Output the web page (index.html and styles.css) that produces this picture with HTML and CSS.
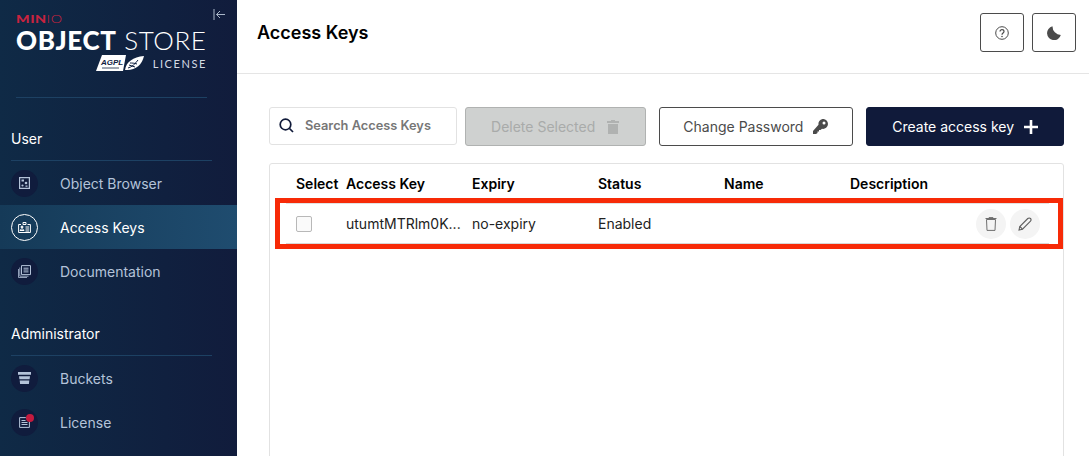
FILE: index.html
```html
<!DOCTYPE html>
<html lang="en">
<head>
  <meta charset="UTF-8">
  <title>Access Keys</title>
  <link rel="stylesheet" href="styles.css">
</head>
<body>
  <div class="app">
    <!-- Sidebar -->
    <aside class="sidebar">
      <svg class="collapse" width="13" height="13" viewBox="0 0 13 13" fill="none" stroke="#a9b6c8" stroke-width="1"><path d="M1 1v11M12 6.5H3.5M7 3 3.5 6.500 7 10"/></svg>
      <div class="logo">
        <div class="logo-minio"><b>MIN</b>IO</div>
        <div class="logo-name"><b>OBJECT</b> STORE</div>
        <div class="logo-license">
          <svg class="agpl" width="48" height="17" viewBox="0 0 48 17"><path d="M6 0h24l-3 16H0z" fill="#fff"/><text class="agpl-text" x="5" y="10">AGPL</text><path d="M6 13h17" stroke="#10203f" stroke-width=".8"/><path d="M29 15C30 7 37 2 48 1 46 10 39 16 29 15z" fill="#fff"/><path d="M32 13c4-1 7-4 10-8M34 8c2 0 4 0 7 1M33 10c2 1 4 1 6 2" stroke="#10203f" fill="none"/></svg>
          <span>LICENSE</span>
        </div>
      </div>
      <div class="logo-line"></div>

      <div class="section">User</div>
      <a class="nav-item">
        <span class="nav-icon"><svg width="11" height="12" viewBox="0 0 11 12" fill="#b4c3d9"><path d="M0 0h11v12H0zM1.200 1.200v9.600h8.600V1.200z"/><rect x="2.500" y="2.500" width="2.500" height="2"/><circle cx="7" cy="6" r="1.300"/><circle cx="3.500" cy="8.500" r="1.100"/><rect x="6.500" y="8.500" width="2" height="1.300"/></svg></span>
        Object Browser
      </a>
      <a class="nav-item active">
        <span class="nav-icon"><svg width="13" height="11" viewBox="0 0 13 11" fill="none" stroke="#fff"><path d="M3 2.500H.6v8h11.800v-8H9.500"/><path d="M5 .5h3v2H5z"/><circle cx="4" cy="5" r="1" fill="#fff"/><path d="M2 8.500c.3-2 3.700-2 4 0zM7.500 5H11M7.500 7H11M7.500 9H11"/></svg></span>
        Access Keys
      </a>
      <a class="nav-item">
        <span class="nav-icon"><svg width="13" height="13" viewBox="0 0 13 13" fill="none" stroke="#b4c3d9"><path d="M3.500.6h9v9h-9zM5.500 3.200h5M5.500 5h5M5.500 6.900h5"/><path d="M1.800 2.500v8.700h8.700M.5 4v8.500H9" stroke-width=".8"/></svg></span>
        Documentation
      </a>

      <div class="section">Administrator</div>
      <a class="nav-item">
        <span class="nav-icon"><svg width="13" height="12" viewBox="0 0 13 12" fill="#b4c3d9"><path d="M0 0h13v2.800H0zM1 4.200h11l-.4 3H1.400zM1.700 8.500h9.600l-.4 3.500H2.100z"/></svg></span>
        Buckets
      </a>
      <a class="nav-item">
        <span class="nav-icon"><svg width="11" height="11" viewBox="0 0 11 11" fill="none" stroke="#b4c3d9"><path d="M.6.6h6l3.800 2.500v7.300H.6zM2.500 3.500h4M2.500 5.500h6M2.500 7.500h6"/></svg><i class="dot"></i></span>
        License
      </a>
    </aside>

    <!-- Main -->
    <main class="main">
      <header class="topbar">
        <h1>Access Keys</h1>
        <div class="top-actions">
          <button class="square"><svg width="14" height="14" viewBox="0 0 14 14" fill="none" stroke="#4b4b4b"><circle cx="7" cy="7" r="6.300"/><path d="M5 5.500C5 3 9 3 9 5.500 9 7 7 7 7 8.700" stroke-width="1.200"/><circle cx="7" cy="10.500" r=".8" fill="#4b4b4b" stroke="none"/></svg></button>
          <button class="square"><svg width="14" height="14" viewBox="0 0 14 14" fill="#4b4b4b"><path d="M5.500.3a7 7 0 1 0 8.300 8.700A8.500 8.500 0 0 1 5.500.3z"/></svg></button>
        </div>
      </header>

      <div class="content">
        <div class="toolbar">
          <label class="search">
            <svg width="15" height="15" viewBox="0 0 15 15" fill="none" stroke="#101a3a" stroke-width="1.700"><circle cx="6.500" cy="6.500" r="5.300"/><path d="M10.500 10.500 14 14"/></svg>
            <input type="text" placeholder="Search Access Keys">
          </label>
          <button class="btn btn-disabled">Delete Selected
            <svg width="12" height="14" viewBox="0 0 12 14" fill="#b0b2b1"><path d="M4 0h4v1h4v2H0V1h4zM1 4h10v10H1z"/></svg>
          </button>
          <button class="btn btn-outline">Change Password
            <svg width="15" height="15" viewBox="0 0 15 15" fill="#4b4b4b"><path d="M9.500 0A5 5 0 0 1 15 5a5 5 0 0 1-6 4.800L7.500 11H6v1.500H4.500V14L3 15H0v-3l5.500-6.300A5 5 0 0 1 9.500 0zm1.500 2.500a1.500 1.500 0 1 0 0 3 1.500 1.500 0 0 0 0-3z"/></svg>
          </button>
          <button class="btn btn-primary">Create access key
            <svg width="14" height="14" viewBox="0 0 14 14" fill="#fff"><path d="M5.700 0h2.600v5.700H14v2.600H8.300V14H5.700V8.300H0V5.700h5.700z"/></svg>
          </button>
        </div>

        <div class="table-box">
          <div class="table-row table-head">
            <span class="col-select">Select</span>
            <span class="col">Access Key</span>
            <span class="col">Expiry</span>
            <span class="col">Status</span>
            <span class="col">Name</span>
            <span class="col">Description</span>
          </div>
          <div class="table-row table-body">
            <span class="col-select"><i class="check"></i></span>
            <span class="col key">utumtMTRlm0K...</span>
            <span class="col">no-expiry</span>
            <span class="col">Enabled</span>
            <span class="col"></span>
            <span class="col"></span>
            <span class="row-actions">
              <button class="round"><svg width="12" height="14" viewBox="0 0 12 14" fill="none" stroke="#6f6f6f"><path d="M1.500 2.500h9l-.5 10.900H2zM.5 1.500h11M4 1.500V.6h4v.9"/></svg></button>
              <button class="round"><svg width="14" height="14" viewBox="0 0 14 14" fill="none" stroke="#5f5f5f" stroke-width="1.100"><path d="M1 13l.8-3.500L9.800 1.500a1.500 1.500 0 0 1 2.700 2.700L4.500 12.200z"/><path d="M1.800 9.500l2.700 2.700"/></svg></button>
            </span>
          </div>
          <div class="highlight"></div>
        </div>
      </div>
    </main>
  </div>
</body>
</html>
```

FILE: styles.css
```css
* {
  box-sizing: border-box;
}
html, body {
  margin: 0;
  height: 456px;
  overflow: hidden;
}
body {
  font-family: Inter, "Liberation Sans", sans-serif;
  font-size: 14px;
  color: #000;
  background-color: #fff;
}
button {
  font-family: inherit;
  cursor: pointer;
}
.app {
  display: flex;
  height: 456px;
}

/* Sidebar */
.sidebar {
  position: relative;
  flex: 0 0 236px;
  background: linear-gradient(90deg, #0f2a46 0%, #10203f 70%, #111c3c 100%);
  color: #fff;
}
.collapse {
  position: absolute;
  top: 8px;
  left: 213px;
}
.logo {
  height: 97px;
  padding: 14px 30px 0 16px;
}
.logo-minio {
  font-family: Lato, sans-serif;
  font-size: 11px;
  line-height: 10px;
  letter-spacing: .4px;
  font-weight: 300;
  color: #c8233f;
  transform: scaleX(1.300);
  transform-origin: left;
}
.logo-minio b {
  font-weight: 900;
}
.logo-name {
  font-family: Lato, sans-serif;
  font-size: 26px;
  line-height: 28px;
  margin-top: 2px;
  white-space: nowrap;
  width: 191px;
  letter-spacing: .6px;
  font-weight: 300;
}
.logo-name b {
  font-weight: 900;
}
.logo-license {
  display: flex;
  justify-content: flex-end;
  align-items: center;
  gap: 9px;
  margin-top: 1px;
  font-family: Lato, sans-serif;
  font-size: 11px;
  letter-spacing: 1.600px;
  color: #d5dbe5;
}
.agpl-text {
  font-family: "Liberation Sans", sans-serif;
  font-size: 8px;
  font-weight: 700;
  font-style: italic;
  letter-spacing: 0;
  fill: #10203f;
}
.logo-line {
  height: 1px;
  margin: 0 30px 0 16px;
  background-color: #1d4163;
}
.section {
  margin: 28px 25px 0 11px;
  height: 35px;
  padding-top: 4px;
  line-height: 18px;
  border-bottom: 1px solid #1d4163;
  color: #fff;
}
.nav-item {
  display: flex;
  align-items: center;
  height: 44px;
  padding-left: 11px;
  gap: 22px;
  color: #b4c3d9;
}
.nav-item.active {
  color: #fff;
  background: linear-gradient(90deg, #153a58, #1f4c6f);
}
.nav-icon {
  position: relative;
  display: flex;
  align-items: center;
  justify-content: center;
  width: 27px;
  height: 27px;
  border-radius: 50%;
  background-color: #101c3d;
}
.active .nav-icon {
  background-color: transparent;
  border: 1px solid #fff;
}
.dot {
  position: absolute;
  top: 5px;
  left: 15px;
  width: 8px;
  height: 8px;
  border-radius: 50%;
  background-color: #c51b3f;
}

/* Main */
.main {
  flex: 1;
  min-width: 0;
}
.topbar {
  display: flex;
  justify-content: space-between;
  align-items: center;
  height: 74px;
  padding: 0 13px 8px 20px;
  border-bottom: 1px solid #e5e5e5;
}
.topbar h1 {
  margin: 0;
  font-size: 18px;
  font-weight: 600;
  line-height: 24px;
}
.top-actions {
  display: flex;
  gap: 8px;
}
.square {
  display: flex;
  align-items: center;
  justify-content: center;
  width: 44px;
  height: 39px;
  padding: 0;
  border: 1px solid #4b4b4b;
  border-radius: 3px;
  background-color: #fff;
}
.content {
  padding: 32px 25px 0 32px;
}
.toolbar {
  display: flex;
  align-items: center;
  height: 40px;
}
.search {
  display: flex;
  align-items: center;
  gap: 11px;
  width: 188px;
  height: 38px;
  margin: -1px 8px 0 0;
  padding-left: 9px;
  border: 1px solid #e2e2e2;
  border-radius: 3px;
}
.search input {
  width: 150px;
  border: none;
  outline: none;
  padding: 0;
  font-family: inherit;
  font-size: 12.800px;
  font-weight: 600;
}
.search input::placeholder {
  color: #777;
  opacity: 1;
}
.btn {
  display: flex;
  align-items: center;
  justify-content: center;
  gap: 10px;
  height: 39px;
  margin-top: 1px;
  padding: 0;
  border-radius: 3px;
  font-size: 14px;
}
.btn-disabled {
  width: 181px;
  gap: 12px;
  margin-right: 13px;
  border: 1px solid #b0b2b1;
  background-color: #cfd1d0;
  color: #a9abaa;
}
.btn-outline {
  width: 195px;
  margin-right: 13px;
  border: 1px solid #4b4b4b;
  background-color: #fff;
  color: #4b4b4b;
}
.btn-primary {
  width: 198px;
  border: 1px solid #101a3a;
  background-color: #101a3a;
  color: #fff;
}
.table-box {
  position: relative;
  height: 300px;
  margin-top: 17px;
  border: 1px solid #e2e2e2;
  border-radius: 3px;
}
.table-row {
  display: grid;
  grid-template-columns: 50px repeat(5, 126px) 1fr;
  align-items: center;
  margin: 0 14px 0 16px;
  padding: 0 10px;
}
.table-head {
  height: 39px;
  font-weight: 600;
  font-size: 14px;
}
.table-body {
  height: 41px;
  border-top: 1px solid #e2e2e2;
  border-bottom: 1px solid #d8d8d8;
  color: #222;
}
.key {
  white-space: nowrap;
}
.col-select {
  display: flex;
  align-items: center;
}
.check {
  display: block;
  width: 16px;
  height: 16px;
  border: 1px solid #b8b8b8;
  border-radius: 2px;
  background-color: #fafafa;
}
.row-actions {
  display: flex;
  justify-content: flex-end;
  gap: 4px;
}
.round {
  display: flex;
  align-items: center;
  justify-content: center;
  width: 30px;
  height: 30px;
  padding: 0;
  border: none;
  border-radius: 50%;
  background-color: #f4f4f4;
}
.highlight {
  position: absolute;
  top: 34px;
  left: 5px;
  right: 0;
  height: 51px;
  border: 5px solid #f72a07;
}
```
